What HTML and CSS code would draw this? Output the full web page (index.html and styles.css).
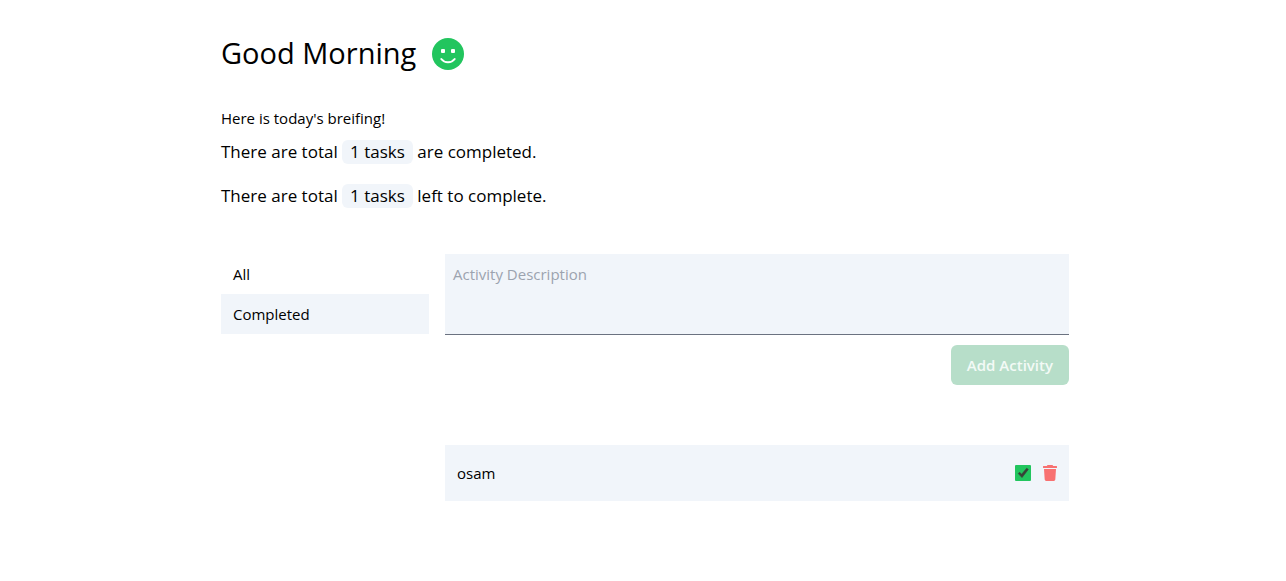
FILE: index.html
```html
<!DOCTYPE html>
<html lang="en">
<head>
<meta charset="utf-8">
<meta name="viewport" content="width=device-width, initial-scale=1">
<title>Activities</title>
<link rel="stylesheet" href="styles.css">
</head>
<body>
<div class="page">
  <header class="greeting">
    <h1 class="greeting-title">Good Morning</h1>
    <svg class="greeting-icon" viewBox="0 0 32 32" aria-hidden="true">
      <circle cx="16" cy="16" r="16" fill="#22c55e"/>
      <rect x="9" y="11" width="4" height="4" rx="1" fill="#fff"/>
      <rect x="19" y="11" width="4" height="4" rx="1" fill="#fff"/>
      <path d="M9.300 21C12.500 25.300 19.500 25.300 22.700 21" fill="none" stroke="#fff" stroke-width="2" stroke-linecap="round"/>
    </svg>
  </header>
  <section class="briefing">
    <p class="briefing-intro">Here is today's breifing!</p>
    <p class="briefing-line">There are total <span class="count">1 tasks</span> are completed.</p>
    <p class="briefing-line">There are total <span class="count">1 tasks</span> left to complete.</p>
  </section>
  <main class="board">
    <nav class="filters">
      <button class="filter" type="button">All</button>
      <button class="filter filter-active" type="button">Completed</button>
    </nav>
    <div class="content">
      <form class="composer">
        <textarea class="composer-input" placeholder="Activity Description" aria-label="Activity Description"></textarea>
        <button class="composer-submit" type="submit" disabled>Add Activity</button>
      </form>
      <ul class="tasks">
        <li class="task">
          <label class="task-name" for="task-1">osam</label>
          <span class="task-check">
            <input class="task-box" id="task-1" type="checkbox" checked>
            <svg class="task-tick" viewBox="0 0 16 16" aria-hidden="true"><path d="M3.200 8.500L4.700 7.300L6.600 9.300L11.700 3.200L13.300 4.400L7 12.600Z" fill="#374137" stroke="#374137" stroke-width=".6" stroke-linejoin="round"/></svg>
          </span>
          <button class="task-delete" type="button" aria-label="Delete osam">
            <svg class="trash" viewBox="0 0 14 16" aria-hidden="true"><path fill="#f87171" d="M4.500 0H9.500L10.200 1H13.500Q14 1 14 1.500V2.500Q14 3 13.500 3H.5Q0 3 0 2.500V1.500Q0 1 .5 1H3.800ZM1 4H13L12.300 14.600Q12.200 16 10.800 16H3.200Q1.800 16 1.700 14.600Z"/></svg>
          </button>
        </li>
      </ul>
    </div>
  </main>
</div>
</body>
</html>
```
FILE: styles.css
```css
* {
  box-sizing: border-box;
}

body {
  margin: 0;
  padding-left: 4px;
  background: #fff;
  color: #000;
  font: 15px/24px "Segoe UI", "Open Sans", "Noto Sans", sans-serif;
}

h1, p, ul {
  margin: 0;
  padding: 0;
}

button, textarea {
  border: 0;
  border-radius: 0;
  color: inherit;
  font: inherit;
}

.page {
  max-width: 848px;
  margin: 0 auto;
  padding: 36px 0;
}

.greeting {
  display: flex;
  align-items: center;
  gap: 16px;
}

.greeting-title {
  padding-bottom: 2px;
  font-size: 29px;
  font-weight: 400;
  line-height: 34px;
}

.greeting-icon {
  width: 32px;
  height: 32px;
}

.briefing {
  display: grid;
  margin-top: 34px;
}

.briefing-line {
  margin-top: 10px;
  margin-bottom: 10px;
  font-size: 17px;
  line-height: 24px;
}

.count {
  display: inline-block;
  padding: 0 8px;
  border-radius: 6px;
  background: #f1f5fa;
}

.board {
  display: grid;
  grid-template-columns: 1fr 3fr;
  gap: 16px;
  margin-top: 36px;
}

.filter {
  display: block;
  width: 100%;
  padding: 8px 12px;
  background: transparent;
  text-align: left;
}

.filter-active,
.task,
.composer-input {
  background: #f1f5fa;
}

.composer {
  display: flex;
  flex-direction: column;
  align-items: flex-end;
  gap: 10px;
}

.composer-input {
  display: block;
  width: 100%;
  height: 81px;
  padding: 8px;
  border-bottom: 1px solid #6b7280;
  outline: 0;
  resize: none;
}

.composer-input::placeholder {
  color: #9ca3af;
  opacity: 1;
}

.composer-submit {
  padding: 8px 16px;
  border-radius: 6px;
  background: #b7dec9;
  color: #f3faf6;
  font-weight: 600;
}

.tasks {
  margin-top: 60px;
  list-style: none;
}

.task {
  display: flex;
  align-items: center;
  gap: 12px;
  padding: 16px 12px;
}

.task-name {
  flex: 1;
}

.task-check {
  display: grid;
}

.task-box,
.task-tick {
  grid-area: 1 / 1;
  width: 16px;
  height: 16px;
  margin: 0;
}

.task-box {
  appearance: none;
  border-radius: 1px;
  background: #22c55e;
}

.task-tick {
  pointer-events: none;
  visibility: hidden;
}

.task-box:checked + .task-tick {
  visibility: visible;
}

.task-delete {
  display: flex;
  padding: 0;
  background: transparent;
}

.trash {
  width: 14px;
  height: 16px;
}
```
